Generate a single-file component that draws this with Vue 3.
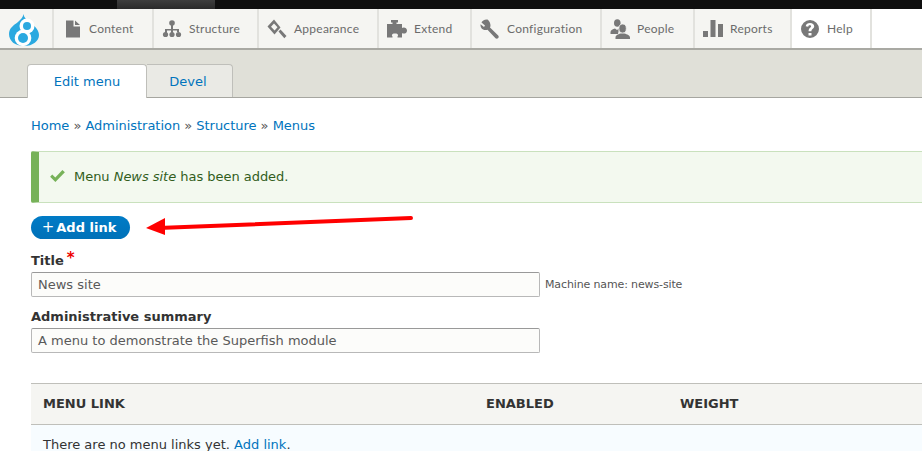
<script setup>
const items = [
  { label: 'Content', w: 100, icon: 'content' },
  { label: 'Structure', w: 105, icon: 'structure' },
  { label: 'Appearance', w: 120, icon: 'appearance' },
  { label: 'Extend', w: 93, icon: 'extend' },
  { label: 'Configuration', w: 130, icon: 'config' },
  { label: 'People', w: 93, icon: 'people' },
  { label: 'Reports', w: 97, icon: 'reports' },
  { label: 'Help', w: 80, icon: 'help' }
]
</script>

<template>
  <div class="page">
    <div class="topbar"><div class="toptab"></div></div>
    <nav class="toolbar">
      <div class="logo">
        <svg width="32" height="34" viewBox="0 0 32 34">
          <path fill="#2ba9e0" d="M15.500 1C16 5 19 7 23 10C28 14 31 18 31 22C31 28 25 33 16 33C7 33 1 28 1 21C1 15 6 12 10 9C13 6.500 15 4 15.500 1z" />
          <circle cx="19" cy="13" r="7.500" fill="#fff" />
          <circle cx="15" cy="25" r="8.300" fill="#fff" />
          <circle cx="19" cy="13" r="4" fill="#2ba9e0" />
          <circle cx="15" cy="25" r="5" fill="#2ba9e0" />
        </svg>
      </div>
      <a v-for="it in items" :key="it.label" class="item" :class="{ white: it.icon === 'help' }" :style="{ width: it.w + 'px' }">
        <svg class="ico" width="20" height="20" viewBox="0 0 20 20" fill="#787878">
          <path v-if="it.icon === 'content'" d="M4 1.500h7.500v6H18v11H4zM13 1.500 18 6h-5z" />
          <g v-else-if="it.icon === 'structure'">
            <circle cx="10" cy="4" r="2.800" />
            <path d="M9 6h2v4h6v3h-2v-1.500h-4V14H9v-2.500H5V14H3v-4h6z" />
            <circle cx="3.500" cy="15.500" r="2.600" /><circle cx="10" cy="15.500" r="2.600" /><circle cx="16.500" cy="15.500" r="2.600" />
          </g>
          <g v-else-if="it.icon === 'appearance'">
            <path fill-rule="evenodd" d="M.5 7.500 7 .5l6.500 8-6 7zM7 4.500 4 7.800l3.600 3.700 2.900-3.300z" />
            <path d="M11.500 12.500 13.500 10.500 19.500 17 17.300 19.200z" />
          </g>
          <path v-else-if="it.icon === 'extend'" d="M0 5H5.500V3.500H4V1H11V3.500H9.500V5H15V9C16 8 20 8 20 11.500S16 15 15 14V18.500H10.500V17.500C11.500 16.500 11.500 14.500 8 14.500S4.500 16.500 5.500 17.500V18.500H0Z" />
          <path v-else-if="it.icon === 'config'" d="M7.500.5C4.500.2 2 2 1.500 3.500L5 6.500 4 8 .6 5.200C0 8 2 11 5.500 11c.8 0 1.500 0 2-.3l8 8.600c.8.600 2 .6 2.700-.2.700-.8.700-1.800 0-2.600L10 8.500c.3-.6.500-1.300.5-2 0-2-1-4.500-3-6z" />
          <g v-else-if="it.icon === 'people'">
            <ellipse cx="7.300" cy="4" rx="3.300" ry="3.800" />
            <path d="M.5 15V13C.5 11 3 10 5 9.500L7 11 9 9.500 8 15z" />
            <ellipse cx="12.600" cy="9.500" rx="3.700" ry="4.500" stroke="#f5f5f2" stroke-width=".8" />
            <path d="M5.500 20V18.500C5.500 16 8 15.500 10.500 14.500H14.500C17 15.500 20 16 20 18.500V20Z" />
          </g>
          <path v-else-if="it.icon === 'reports'" d="M0 12h5v6H0zM7.500 1h5v17h-5zM15 5h5v13h-5z" />
          <path v-else fill-rule="evenodd" d="M10 1a9 9 0 1 0 0 18 9 9 0 0 0 0-18zm-1.500 13h3v2.500h-3zm1.500-10c2.500 0 4.200 1.300 4.200 3.300 0 2.400-2.700 2.700-2.800 5H8.600c0-3.300 2.500-3.600 2.500-5 0-.6-.5-1-1.300-1-.9 0-1.400.5-1.600 1.400l-2.500-.5C6.100 5.100 7.700 4 10 4z" />
        </svg>
        <span>{{ it.label }}</span>
      </a>
    </nav>
    <header class="head">
      <a class="tab active">Edit menu</a>
      <a class="tab devel">Devel</a>
    </header>
    <main class="main">
      <div class="crumbs">
        <a>Home</a> » <a>Administration</a> » <a>Structure</a> » <a>Menus</a>
      </div>
      <div class="msg">
        <svg width="15" height="12" viewBox="0 0 16 13"><path fill="#77b259" d="M0 7.200 2.300 5l3.300 3.200L13.300 0 16 2.400 5.700 13z" /></svg>
        <span>Menu <em>News site</em> has been added.</span>
      </div>
      <a class="btn"><span class="plus">+</span>Add link</a>
      <label class="lbl lbl1">Title<span class="req">*</span></label>
      <div class="row">
        <div class="input">News site</div>
        <span class="machine">Machine name: news-site</span>
      </div>
      <label class="lbl lbl2">Administrative summary</label>
      <div class="input">A menu to demonstrate the Superfish module</div>
      <div class="table">
        <div class="thead">
          <div class="c1">MENU LINK</div>
          <div class="c2">ENABLED</div>
          <div class="c3">WEIGHT</div>
        </div>
        <div class="tbody">There are no menu links yet. <a>Add link</a>.</div>
      </div>
    </main>
    <svg class="arrow" width="290" height="40" viewBox="0 0 290 40">
      <path d="M266 8 20 17.800" stroke="#f00" stroke-width="4" stroke-linecap="round" fill="none" />
      <path d="M1 18 20 8v17z" fill="#f00" />
    </svg>
  </div>
</template>

<style>
html, body { margin: 0; background: #fff; overflow: hidden; }
</style>

<style scoped>
.page {
  position: relative;
  width: 922px;
  height: 451px;
  overflow: hidden;
  font-family: "DejaVu Sans", sans-serif;
  font-size: 13px;
  color: #333;
}
a { color: #0074bd; text-decoration: none; }
.topbar { height: 9px; background: #0f0f0f; }
.toptab { width: 98px; height: 9px; margin-left: 117px; background: linear-gradient(#3e3e3e, #2a2a2a); }
.toolbar {
  display: flex;
  height: 39px;
  background: #fff;
  border-bottom: 2px solid #a9a9a3;
  box-sizing: content-box;
}
.logo {
  width: 54px;
  background: #f5f5f2;
  border-right: 2px solid #e2e2de;
  box-sizing: border-box;
  padding: 4px 0 0 8px;
}
.logo svg { display: block; }
.item {
  display: flex;
  align-items: center;
  box-sizing: border-box;
  padding-left: 8px;
  gap: 7px;
  background: #f5f5f2;
  border-right: 2px solid #e2e2de;
  font-family: Lato, sans-serif;
  font-size: 12px;
  letter-spacing: .25px;
  color: #6b6b6b;
}
.item.white { background: #fff; }
.ico { flex: none; }
.head {
  display: flex;
  align-items: flex-end;
  height: 48px;
  padding-left: 27px;
  background: #e0e0d8;
  border-bottom: 1px solid #a6a6a0;
  box-sizing: border-box;
}
.tab {
  box-sizing: border-box;
  height: 33px;
  width: 86px;
  display: flex;
  align-items: center;
  justify-content: center;
  background: #eaeae5;
  border: 1px solid #bfbfba;
  border-bottom: none;
  border-left: none;
  border-radius: 0 4px 0 0;
}
.tab.devel { padding-right: 3px; }
.tab.active {
  width: 120px;
  height: 34px;
  margin-bottom: -1px;
  background: #fff;
  border-radius: 4px 4px 0 0;
  border-left: 1px solid #bfbfba;
}
.main { padding: 20px 0 0 31px; }
.crumbs { line-height: 15px; height: 15px; color: #555; letter-spacing: -.03px; }
.msg {
  display: flex;
  align-items: center;
  gap: 9px;
  margin-top: 18px;
  height: 52px;
  box-sizing: border-box;
  padding: 0 0 2px 11px;
  background: #f3f9ef;
  border: 1px solid #c9e1bd;
  border-left: 8px solid #77b259;
  border-right: none;
  border-radius: 2px 0 0 2px;
  color: #325e1c;
  letter-spacing: -.03px;
}
.btn {
  display: flex;
  align-items: center;
  justify-content: center;
  width: 99px;
  height: 23px;
  margin-top: 13px;
  padding-right: 3px;
  box-sizing: border-box;
  border-radius: 12px;
  background: linear-gradient(#007bc6, #0071b8);
  color: #fff;
  font-weight: 700;
}
.plus { font-weight: 400; font-size: 15px; line-height: 1; margin-right: 2px; }
.lbl { display: block; font-weight: 700; line-height: 15px; }
.lbl1 { margin-top: 14px; }
.lbl2 { margin-top: 12px; }
.req { color: #e00; margin-left: 3px; font-size: 15px; position: relative; top: -2px; }
.row { display: flex; align-items: center; gap: 5px; }
.input {
  box-sizing: border-box;
  width: 509px;
  height: 25px;
  margin-top: 4px;
  padding-left: 6px;
  line-height: 23px;
  background: #fcfcfa;
  border: 1px solid #b8b8b8;
  border-top-color: #999;
  border-radius: 2px;
  color: #595959;
}
.machine { font-size: 11px; color: #555; margin-top: 3px; letter-spacing: -.13px; }
.table { margin-top: 30px; }
.thead {
  display: flex;
  align-items: center;
  height: 42px;
  box-sizing: border-box;
  padding-bottom: 2px;
  background: #f5f5f2;
  border-top: 1px solid #bfbfba;
  border-bottom: 1px solid #bfbfba;
  font-weight: 700;
}
.c1 { width: 455px; padding-left: 12px; box-sizing: border-box; }
.c2 { width: 194px; }
.tbody { background: #f7fcff; padding: 12px 12px 0; height: 40px; line-height: 16px; box-sizing: border-box; }
.arrow { position: absolute; left: 145px; top: 210px; }
</style>
